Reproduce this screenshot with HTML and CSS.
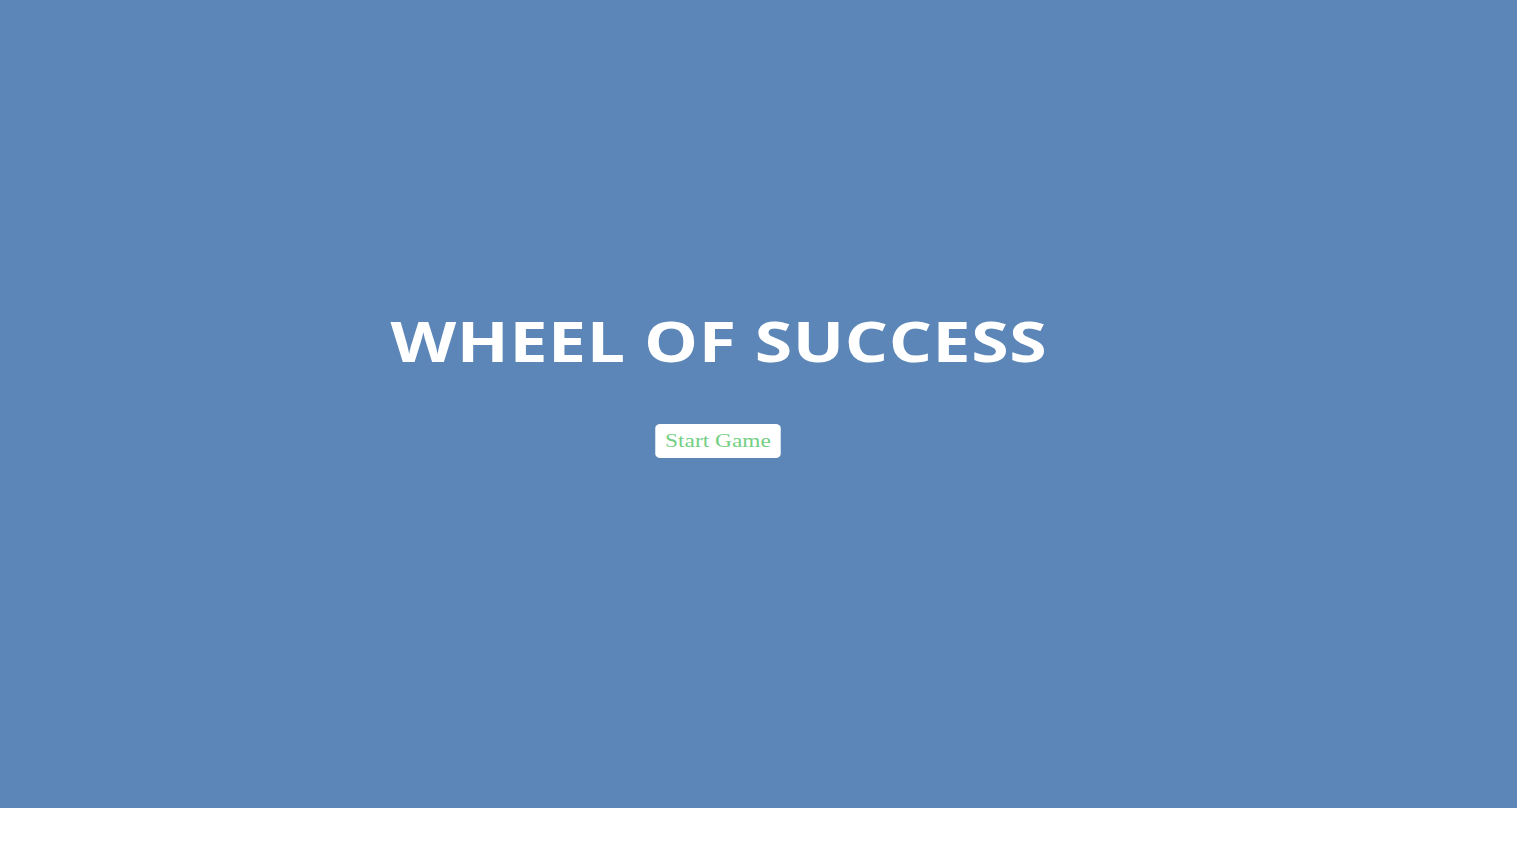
FILE: index.html
```html
<!DOCTYPE html>
<html>
<head>
<meta charset="utf-8">
<link rel="stylesheet" href="styles.css">
</head>
<body>
<main class="stage">
  <h1 class="title">WHEEL OF SUCCESS</h1>
  <button class="start-btn">Start Game</button>
</main>
</body>
</html>
```
FILE: styles.css
```css
html, body {
  margin: 0;
  padding: 0;
  background: #ffffff;
}
.stage {
  height: 808px;
  background: #5b86b7;
  display: flex;
  flex-direction: column;
  align-items: center;
  justify-content: center;
  padding-right: 80px;
  padding-bottom: 42px;
  box-sizing: border-box;
}
.title {
  margin: 0;
  font-family: "Open Sans", sans-serif;
  font-weight: 700;
  font-size: 55px;
  line-height: 1.2;
  color: #ffffff;
  letter-spacing: 0.5px;
  transform: scaleX(1.235);
}
.start-btn {
  margin-top: 50px;
  background: #ffffff;
  border: none;
  border-radius: 4px;
  padding: 6px 8px;
  font-family: "Liberation Serif", serif;
  font-size: 19px;
  color: #74cf84;
  cursor: pointer;
  transform: scaleX(1.23);
}
```
